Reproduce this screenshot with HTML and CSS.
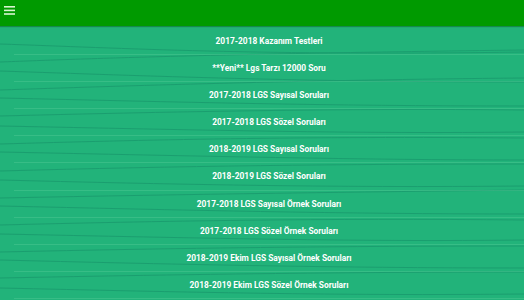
FILE: index.html
```html
<!DOCTYPE html>
<html lang="tr">
<head>
    <meta charset="UTF-8">
    <meta name="viewport" content="width=device-width, initial-scale=1.0">
    <title>LGS Soruları</title>
    <link rel="stylesheet" href="styles.css">
</head>
<body>
    <div class="toolbar">
        <button class="menu-button" aria-label="Menü">
            <svg width="11" height="9" viewBox="0 0 11 9">
                <rect x="0" y="0" width="11" height="1.6" fill="#d8f5d0"/>
                <rect x="0" y="3.6" width="11" height="1.6" fill="#d8f5d0"/>
                <rect x="0" y="7.2" width="11" height="1.6" fill="#d8f5d0"/>
            </svg>
        </button>
    </div>

    <div class="board">
        <!-- wood grain decoration behind the list -->
        <svg class="grain" width="524" height="280" viewBox="0 0 524 280" preserveAspectRatio="none">
            <g fill="none" stroke="#17936a" stroke-width="0.9" opacity="0.7">
                <path d="M0 18 C120 22 260 30 524 26"/>
                <path d="M0 36 C80 33 200 28 524 24"/>
                <path d="M0 45 C150 50 300 56 524 56"/>
                <path d="M0 64 C120 60 300 54 524 52"/>
                <path d="M0 72 C180 76 320 80 524 80"/>
                <path d="M0 90 C160 86 340 82 524 84"/>
                <path d="M0 100 C200 104 360 108 524 106"/>
                <path d="M0 118 C140 114 300 110 524 112"/>
                <path d="M0 126 C200 130 360 134 524 134"/>
                <path d="M0 145 C180 140 340 138 524 138"/>
                <path d="M0 154 C160 158 330 162 524 160"/>
                <path d="M0 172 C200 168 360 166 524 164"/>
                <path d="M0 180 C180 184 340 188 524 188"/>
                <path d="M0 199 C160 195 320 192 524 194"/>
                <path d="M0 208 C200 212 360 216 524 214"/>
                <path d="M0 226 C180 222 340 220 524 220"/>
                <path d="M0 234 C160 238 330 242 524 242"/>
                <path d="M0 252 C200 248 360 246 524 246"/>
                <path d="M0 262 C180 266 340 270 524 268"/>
            </g>
        </svg>

        <ul class="test-list">
            <li class="test-item">2017-2018 Kazanım Testleri</li>
            <li class="test-item">**Yeni** Lgs Tarzı 12000 Soru</li>
            <li class="test-item">2017-2018 LGS Sayısal Soruları</li>
            <li class="test-item">2017-2018 LGS Sözel Soruları</li>
            <li class="test-item">2018-2019 LGS Sayısal Soruları</li>
            <li class="test-item">2018-2019 LGS Sözel Soruları</li>
            <li class="test-item">2017-2018 LGS Sayısal Örnek Soruları</li>
            <li class="test-item">2017-2018 LGS Sözel Örnek Soruları</li>
            <li class="test-item">2018-2019 Ekim LGS Sayısal Örnek Soruları</li>
            <li class="test-item">2018-2019 Ekim LGS Sözel Örnek Soruları</li>
        </ul>
    </div>
</body>
</html>
```

FILE: styles.css
```css
html, body {
    height: 100%;
}

body {
    margin: 0;
    font-family: Roboto, "Noto Sans", Arial, sans-serif;
    background-color: #22b37a;
    overflow: hidden;
}

.toolbar {
    height: 26px;
    background-color: #009a00;
    display: flex;
    align-items: center;
    padding-left: 4px;
    box-shadow: 0 1px 1px rgba(0, 60, 0, 0.35);
    position: relative;
    z-index: 2;
}

.menu-button {
    background: none;
    border: none;
    padding: 0;
    margin-top: -5px;
    display: flex;
    cursor: pointer;
}

.board {
    position: relative;
    height: 274px;
    background-color: #22b37a;
}

.grain {
    position: absolute;
    left: 0;
    top: 0;
}

.test-list {
    position: relative;
    list-style: none;
    margin: 0;
    padding: 2px 0 0 14px;
}

.test-item {
    height: 26.1px;
    line-height: 26.1px;
    text-align: center;
    color: #ffffff;
    font-size: 8.4px;
    font-weight: bold;
    border-bottom: 1px solid rgba(120, 220, 170, 0.25);
}
```
